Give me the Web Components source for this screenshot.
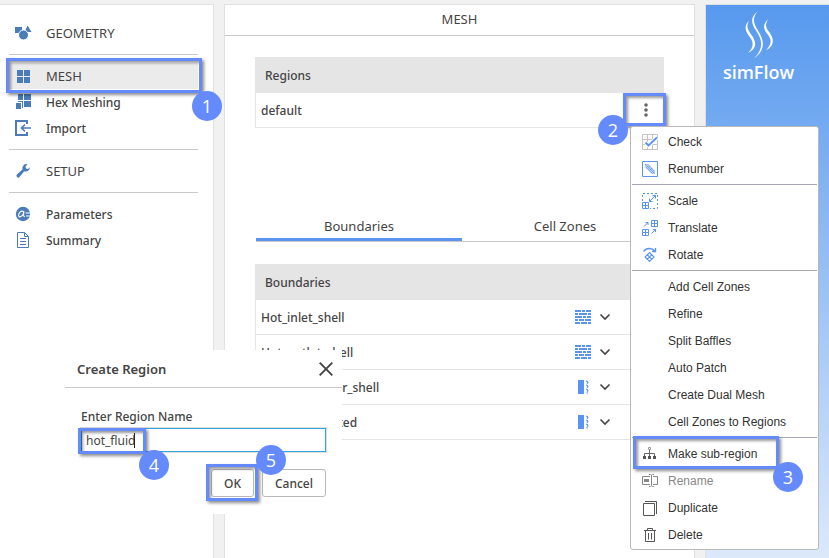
<!DOCTYPE html>
<html lang="en">
<head>
<meta charset="utf-8">
<title>simFlow - Mesh</title>
<style>
  html, body { height: 100%; margin: 0; }
  body { font: 500 12px/18px "Noto Sans", "Open Sans", sans-serif; color: #444; background: #f1f1f1; overflow: hidden; }
</style>
</head>
<body>
<sim-app></sim-app>
<script>
const BLUE = '#4a7cb8', SKY = '#5b93f0';
const svg = (w, h, body) => `<svg width="${w}" height="${h}" viewBox="0 0 ${w} ${h}" aria-hidden="true">${body}</svg>`;

const ICONS = {
  geometry: svg(16, 16, `<path d="M0 2h7v6H0zM12.500 0.500L16.500 7h-7z" fill="${BLUE}"/><circle cx="8.500" cy="10" r="5" fill="${BLUE}" stroke="#fff"/>`),
  mesh: svg(16, 16, `<path d="M2 2h6v6H2zM9 2h6v6H9zM2 9h6v6H2zM9 9h6v6H9z" fill="${BLUE}"/>`),
  hex: svg(16, 16, `<path d="M3 0h5v6H3zM9 0h7v6H9zM9 7h7v6H9zM3 7h5v7H7V8H3zM1 9h5v6H1z" fill="${BLUE}"/>`),
  import: svg(16, 16, `<path d="M12 4V1H1v14h11v-3" fill="none" stroke="${BLUE}" stroke-width="2"/><path d="M16 8H7M10 4.500L6.500 8l3.500 3.500" fill="none" stroke="${BLUE}" stroke-width="1.600"/>`),
  setup: svg(16, 16, `<path d="M15 4.200a4.200 4.200 0 0 1-5.800 4L4.500 14a1.700 1.700 0 0 1-2.600-2.400L7.500 6.600A4.200 4.200 0 0 1 12.500 1.200L10.500 3.500l.5 2 2 .4z" fill="${BLUE}"/>`),
  params: svg(16, 16, `<circle cx="8" cy="8" r="7.200" fill="${BLUE}"/><path d="M8.500 5.500C6 4 3.500 7.500 3.600 9.500c.2 2.500 3 1.500 4.600-1.500L9 5.300c-.8 3-1 5 .8 5.500" fill="none" stroke="#fff" stroke-width="1.100"/><path d="M10.500 7H16M11 10h5" stroke="#fff" stroke-width="1.200"/>`),
  summary: svg(16, 16, `<path d="M2.500.5h7l4 4v11h-11zM9.500.5v4h4M5 6.500h6M5 9.500h6M5 12.500h6" fill="none" stroke="${BLUE}"/>`),
  wall: svg(16, 14, `<path d="M0 1h6M7 1h3M11 1h5M0 4h3M4 4h8M13 4h3M0 7h7M8 7h3M12 7h4M0 10h3M4 10h5M10 10h6M0 13h5M6 13h6M13 13h3" stroke="${SKY}" stroke-width="2"/>`),
  patch: svg(16, 14, `<path d="M3 0h6v14H3z" fill="${SKY}"/><path d="M11 1l2.500 1-2 2M11 5l2.500 1-2 2M11 9l2.500 1-2 2 1 1.500" fill="none" stroke="${SKY}" stroke-width="1.300" stroke-dasharray="2 1"/>`),
  chevron: svg(10, 8, `<path d="M.5 1.500L5 6l4.500-4.500" fill="none" stroke="#444" stroke-width="1.600"/>`),
  dots: svg(6, 14, `<g fill="#666"><circle cx="3" cy="2" r="1.800"/><circle cx="3" cy="7" r="1.800"/><circle cx="3" cy="12" r="1.800"/></g>`),
  close: svg(14, 14, `<path d="M.7.7l12.600 12.600M13.300.7L.7 13.300" stroke="#444" stroke-width="1.900"/>`),
  check: svg(16, 16, `<path d="M.5.5h15v15H.5zM.5 5.500h15M.5 10.500h15M5.500.5v15M10.500.5v15" fill="none" stroke="#c4c4c4"/><path d="M3.500 8.500l3 3 8.500-8" fill="none" stroke="#fff" stroke-width="4"/><path d="M3.500 8.500l3 3 8.500-8" fill="none" stroke="${SKY}" stroke-width="1.800"/>`),
  renumber: svg(16, 16, `<path d="M.5.5h15v15H.5z" fill="#fff" stroke="${SKY}"/><path d="M3 3h3l7 6.500V13h-3L3 6z" fill="${SKY}" opacity=".45"/><path d="M3 3l10 10M6 3.500l6 6.500M4 6.500l6.500 6" stroke="${SKY}" stroke-dasharray="1.500 .8"/>`),
  scale: svg(16, 16, `<path d="M.5 8V.5h15v15H8" fill="none" stroke="${SKY}" stroke-dasharray="2 2"/><path d="M.5 9.500h6v6h-6zM3.500 9.500v6M.5 12.500h6" fill="none" stroke="${SKY}"/><path d="M7.500 8.500l6-6M10.500 2.500h3v3M7.500 5.500v3h3" fill="none" stroke="${SKY}"/>`),
  translate: svg(16, 16, `<path d="M9.500.5h6v6h-6zM12.500.5v6M9.500 3.500h6M.5 9.500h6v6h-6zM3.500 9.500v6M.5 12.500h6" fill="none" stroke="${SKY}"/><path d="M2 6.500L6 2.500M3.500 2.500H6V5M9.500 13.500l4-4M11 9.500h2.500V12" fill="none" stroke="${SKY}"/>`),
  rotate: svg(16, 16, `<path d="M1.500 4.500C4 .5 10 .5 13 4M13.500 1v3.500H10" fill="none" stroke="${SKY}" stroke-width="1.400"/><path d="M7.500 5.500l4.500 4.500-4.500 4.500L3 10zM5.200 7.700l4.500 4.500M9.800 7.700l-4.500 4.500" fill="none" stroke="${SKY}" stroke-width="1.100"/>`),
  subregion: svg(16, 16, `<path d="M7.500 4v4M2.500 11V7.500h10V11M7.500 7v4" fill="none" stroke="#666"/><path d="M6.500 1.500h2v2h-2z" fill="#fff" stroke="#999"/><path d="M1 10h3v3H1zM6 10h3v3H6zM11 10h3v3h-3z" fill="#555"/>`),
  rename: svg(16, 16, `<path d="M8 3.500H.5v8H8M11 3.500h4.500v8H11M9.500 2v11M7 1.500h1.500l1 .8 1-.8H12M7 13.500h1.500l1-.8 1 .8H12" fill="none" stroke="#888"/><path d="M2 6h5v3H2z" fill="#888"/>`),
  duplicate: svg(16, 16, `<path d="M1.500 3.500h11v12h-11zM3 1.500h11.500V14" fill="none" stroke="#555"/>`),
  delete: svg(16, 16, `<path d="M2 3.500h12M5.500 3V1.500h5V3M3.500 4v10.500h9V4M6.500 6v6.500M9.500 6v6.500" fill="none" stroke="#555"/>`),
  logo: svg(32, 48, `<g fill="#fff"><path d="M6 10C1 14 2 20 6 25c5 6 5 11-1 17 10-5 8-12 3.500-18C4.500 18 3 15 6 10z"/><path d="M14.500.5C6 7 9 14 14 21c5 8 7 16-3 26.500C23 39 21 29 15.500 20.500 11 13 8.500 8 14.500.5z"/><path d="M25 8.500c-5 4-5 9-1 14 5 6 5 10-1 17 9-5 8-12 3.500-18-4-5-4.500-8-1.500-13z"/></g>`)
};

function define(name, html) {
  const template = document.createElement('template');
  template.innerHTML = html;
  customElements.define(name, class extends HTMLElement {
    constructor() {
      super();
      const root = this.attachShadow({ mode: 'open' });
      root.append(template.content.cloneNode(true));
      for (const el of root.querySelectorAll('[data-attr]'))
        el.textContent = this.getAttribute(el.dataset.attr) ?? '';
      for (const el of root.querySelectorAll('[data-icon]'))
        el.innerHTML = ICONS[this.getAttribute(el.dataset.icon)] ?? '';
    }
  });
}
const RESET = `*{box-sizing:border-box} svg{display:block;overflow:visible} button{font:inherit;color:inherit;background:none;border:0;padding:0;margin:0}`;

define('step-mark', `<style>
  :host{position:absolute;inset:var(--frame,0);pointer-events:none;z-index:2}
  i{position:absolute;inset:0;border:3px solid #648afb;box-shadow:2px 2px 3px rgba(0,0,0,.45),inset 2px 2px 3px rgba(0,0,0,.4)}
  b{position:absolute;inset:var(--badge);width:30px;height:30px;border-radius:50%;background:#648afb;color:#fff;font:18px/30px "Open Sans",sans-serif;text-align:center}
</style><i></i><b data-attr="number"></b>`);

define('nav-item', `<style>${RESET}
  :host{display:block;position:relative}
  :host([top]){font-size:13px;font-weight:400}
  button{display:flex;align-items:center;gap:15px;width:100%;height:26px;padding:0 6px;text-align:left}
  :host([active]) button{background:#ebebeb}
  :host(:not([top])) .label{padding-top:2px}
</style><button type="button"><span data-icon="icon"></span><span class="label"><slot></slot></span></button><slot name="mark"></slot>`);

define('nav-panel', `<style>${RESET}
  :host{display:block;background:#fff;border:1px solid #e0e0e0;border-left:0;padding:15px 15px 0 9px}
  section + section{border-top:1px solid #c9c9c9;margin-top:8px;padding-top:8px}
</style><nav>
<section><nav-item icon="geometry" top>GEOMETRY</nav-item></section>
<section><nav-item icon="mesh" top active>MESH<step-mark slot="mark" number="1" style="--frame:-5px -4px -4px -3px;--badge:auto -20px -28px auto"></step-mark></nav-item><nav-item icon="hex">Hex Meshing</nav-item><nav-item icon="import">Import</nav-item></section>
<section><nav-item icon="setup" top>SETUP</nav-item></section>
<section><nav-item icon="params">Parameters</nav-item><nav-item icon="summary">Summary</nav-item></section>
</nav>`);

define('data-list', `<style>${RESET}
  :host{display:block;border-left:1px solid #e5e5e5}
  h2{margin:0;padding:10px 9px 8px;height:36px;font:inherit;background:#e5e5e5}
</style><h2 data-attr="heading"></h2><slot></slot>`);

define('list-row', `<style>${RESET}
  :host{display:flex;align-items:center;height:35px;padding:0 5px;border-bottom:1px solid #e5e5e5}
  .name{flex:1;padding-top:2px}
</style><span class="name"><slot></slot></span><slot name="tools"></slot>`);

define('boundary-tools', `<style>${RESET}
  :host{display:flex;align-items:center;gap:9px;margin-right:49px}
</style><span data-icon="kind"></span><button type="button" aria-label="Change type">${ICONS.chevron}</button>`);

define('more-button', `<style>${RESET}
  :host{display:block;position:relative}
  button{display:grid;place-items:center;width:26px;height:26px}
</style><button type="button" aria-label="More actions">${ICONS.dots}</button><slot></slot>`);

define('tab-bar', `<style>${RESET}
  :host{display:block;margin:84px -4px 22px 1px;border-bottom:1px solid #c9c9c9;font-size:13px;font-weight:400}
  div{display:flex;height:29px}
  button{flex:1;padding:2px 0 0;border-bottom:3px solid transparent}
  button[aria-selected=true]{border-color:#5b93f0}
</style><div role="tablist"><button type="button" role="tab" aria-selected="true">Boundaries</button><button type="button" role="tab" aria-selected="false">Cell Zones</button></div>`);

define('mesh-panel', `<style>${RESET}
  :host{display:block;background:#fff;border:1px solid #e0e0e0}
  h1{margin:0;height:31px;padding:5px;font:inherit;font-size:13px;font-weight:400;text-align:center;border-bottom:1px solid #c9c9c9}
  .body{padding:21px 30px}
</style><h1>MESH</h1><div class="body">
<data-list heading="Regions"><list-row>default<more-button slot="tools"><step-mark number="2" style="--frame:-4px -7px -3px -10px;--badge:22px auto auto -25px"></step-mark></more-button></list-row></data-list>
<tab-bar></tab-bar>
<data-list heading="Boundaries">
<list-row>Hot_inlet_shell<boundary-tools slot="tools" kind="wall"></boundary-tools></list-row>
<list-row>Hot_outlet_shell<boundary-tools slot="tools" kind="wall"></boundary-tools></list-row>
<list-row>Hot_exchanger_shell<boundary-tools slot="tools" kind="patch"></boundary-tools></list-row>
<list-row>Hot_fluid_coated<boundary-tools slot="tools" kind="patch"></boundary-tools></list-row>
</data-list></div>`);

define('brand-panel', `<style>${RESET}
  :host{display:flex;flex-direction:column;align-items:center;gap:1px;padding:6px 18px 0 0;color:#fff;font:600 18px/24px "Open Sans",sans-serif;border:1px solid #e0e0e0;border-width:1px 0 0 1px;background:linear-gradient(#5799ee,#dce9fb)}
</style>${ICONS.logo}<span>simFlow</span>`);

define('menu-item', `<style>${RESET}
  :host{display:block;position:relative}
  button{display:flex;align-items:center;gap:10px;width:100%;height:27px;padding:0 10px;text-align:left}
  button>span:first-child{width:16px}
  :host([disabled]) button{color:#888}
</style><button type="button" role="menuitem"><span data-icon="icon"></span><span><slot></slot></span></button><slot name="mark"></slot>`);

define('context-menu', `<style>${RESET}
  :host{display:block;width:189px;padding:1px;background:#fff;border:1px solid #b9b9b9;border-radius:3px;color:#333;font:12px/18px "Liberation Sans",sans-serif}
  hr{margin:2px 0;border:0;height:1px;background:#a5a8b4}
</style><div role="menu">
<menu-item icon="check">Check</menu-item><menu-item icon="renumber">Renumber</menu-item><hr>
<menu-item icon="scale">Scale</menu-item><menu-item icon="translate">Translate</menu-item><menu-item icon="rotate">Rotate</menu-item><hr>
<menu-item>Add Cell Zones</menu-item><menu-item>Refine</menu-item><menu-item>Split Baffles</menu-item><menu-item>Auto Patch</menu-item><menu-item>Create Dual Mesh</menu-item><menu-item>Cell Zones to Regions</menu-item><hr>
<menu-item icon="subregion">Make sub-region<step-mark slot="mark" number="3" style="--frame:-4px 38px -2px 1px;--badge:auto -24px -23px auto"></step-mark></menu-item>
<menu-item icon="rename" disabled>Rename</menu-item><menu-item icon="duplicate">Duplicate</menu-item><menu-item icon="delete">Delete</menu-item></div>`);

define('region-dialog', `<style>${RESET}
  :host{display:block;width:277px;height:164px;background:#fff}
  header{display:flex;justify-content:space-between;align-items:center;height:38px;padding:0 9px 0 12px;border-bottom:1px solid #c9c9c9;font-size:13px}
  h2{margin:0;font:inherit;font-weight:600}
  form{padding:20px 16px 0}
  label{display:block}
  .field{position:relative;margin-top:2px}
  input{display:block;width:100%;height:24px;padding:0 4px;border:1px solid #35a5e0;outline:1px solid #dcdcdc;border-radius:0;font:12px/18px "Noto Sans",sans-serif;color:#444}
  .caret{position:absolute;left:53px;top:5px;width:1px;height:15px;background:#222}
  footer{display:flex;justify-content:flex-end;gap:8px;margin-top:17px}
  footer button{height:28px;border:1px solid #b9b9b9;border-radius:3px;padding:2px 12px 0}
  .ok{position:relative}
</style><div role="dialog" aria-labelledby="t"><header><h2 id="t">Create Region</h2><button type="button" aria-label="Close">${ICONS.close}</button></header>
<form><label for="n">Enter Region Name</label><div class="field"><input id="n" value="hot_fluid"><span class="caret"></span><step-mark number="4" style="--frame:0 180px -2px -3px;--badge:auto -23px -26px auto"></step-mark></div>
<footer><span class="ok"><button type="button">OK</button><step-mark number="5" style="--frame:-5px -4px -4px -5px;--badge:-19px -28px auto auto"></step-mark></span><button type="button">Cancel</button></footer></form></div>`);

define('sim-app', `<style>${RESET}
  :host{display:grid;grid-template-columns:214px minmax(0,1fr) 124px;gap:10px;height:100%;padding-top:4px;position:relative;box-sizing:border-box}
  nav-panel,mesh-panel{border-bottom:0}
  context-menu{position:absolute;top:126px;right:10px;z-index:3}
  region-dialog{position:absolute;top:350px;left:65px;z-index:3}
</style><nav-panel></nav-panel><mesh-panel></mesh-panel><brand-panel></brand-panel><context-menu></context-menu><region-dialog></region-dialog>`);
</script>
</body>
</html>
